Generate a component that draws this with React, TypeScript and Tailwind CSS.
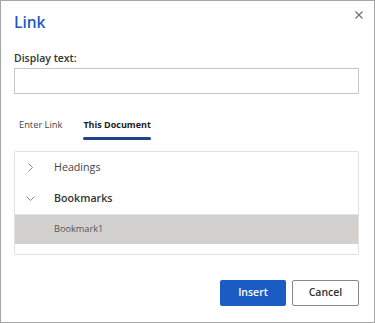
import React from "react";

export default function App() {
  return (
    <div
      className="relative w-[375px] h-[323px] border border-[#a6a6a6] bg-white flex flex-col pl-[13px] pr-[15px]"
      style={{ fontFamily: '"Open Sans", "Noto Sans", sans-serif' }}
    >
      <button className="absolute right-[7px] top-[6px] w-[16px] h-[16px] flex items-center justify-center">
        <svg width="8" height="8" viewBox="0 0 8 8" fill="none" stroke="#6b6b6b" strokeWidth="1.1">
          <path d="M0.5 0.5 L7.5 7.5 M7.5 0.5 L0.5 7.5" />
        </svg>
      </button>
      <div className="pt-[10px] h-[49px] text-[15.5px] leading-[22px] font-semibold text-[#1a5cc0]">Link</div>
      <div className="text-[10.5px] leading-[16px] font-semibold text-[#333] h-[18px]">Display text:</div>
      <input className="w-full h-[26px] border border-[#c6c6c6] outline-none px-2 text-[11px]" />
      <div className="flex gap-[21px] mt-[24px] pl-[5px] text-[9.3px] leading-[14px]">
        <div className="text-[#444]">Enter Link</div>
        <div className="flex flex-col">
          <span className="font-bold text-[#222] text-[9px]">This Document</span>
          <span className="mt-[5px] h-[2.5px] bg-[#1f448c] rounded-sm" />
        </div>
      </div>
      <div className="mt-[11px] border border-[#e1e1e1] rounded-[2px] flex flex-col pb-[10px]">
        <div className="h-[32px] flex items-center text-[10.7px] text-[#444]">
          <span className="w-[39px] flex pl-[13px]">
            <svg width="5" height="9" viewBox="0 0 5 9" fill="none" stroke="#888" strokeWidth="1">
              <path d="M0.5 0.5 L4.5 4.5 L0.5 8.5" />
            </svg>
          </span>
          <span>Headings</span>
        </div>
        <div className="h-[30px] flex items-center text-[10.7px] font-semibold text-[#333]">
          <span className="w-[39px] flex pl-[11px]">
            <svg width="9" height="5" viewBox="0 0 9 5" fill="none" stroke="#888" strokeWidth="1">
              <path d="M0.5 0.5 L4.5 4.5 L8.5 0.5" />
            </svg>
          </span>
          <span>Bookmarks</span>
        </div>
        <div className="h-[30px] flex items-center bg-[#d2d1cf] border-t border-[#e3e3e3] pl-[39px] text-[9.2px] text-[#555]">
          Bookmark1
        </div>
      </div>
      <div className="flex justify-end gap-[6px] mt-[25px]">
        <button className="w-[66px] h-[26px] rounded-[2px] bg-[#1a5bc4] text-white text-[10.5px] font-semibold">Insert</button>
        <button className="w-[67px] h-[26px] rounded-[2px] border border-[#8a8886] bg-white text-[#333] text-[10.5px] font-semibold">Cancel</button>
      </div>
    </div>
  );
}
